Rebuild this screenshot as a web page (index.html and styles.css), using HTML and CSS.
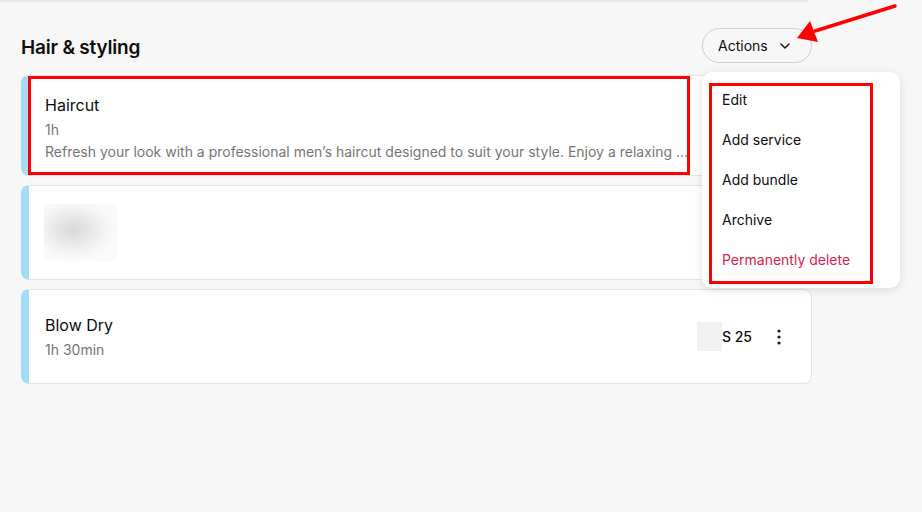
FILE: index.html
```html
<!DOCTYPE html>
<html>
<head>
<meta charset="utf-8">
<link rel="stylesheet" href="styles.css">
</head>
<body>
<div class="divider"></div>
<main class="section">
  <header class="section-head">
    <h2 class="section-title">Hair &amp; styling</h2>
    <div class="actions">
      <button class="actions-btn">Actions
        <svg class="chev" width="10" height="6" viewBox="0 0 10 6"><path d="M1 1l4 4 4-4" fill="none" stroke="#1a1a1a" stroke-width="1.5" stroke-linecap="round" stroke-linejoin="round"/></svg>
      </button>
      <ul class="menu">
        <li class="menu-item">Edit</li>
        <li class="menu-item">Add service</li>
        <li class="menu-item">Add bundle</li>
        <li class="menu-item">Archive</li>
        <li class="menu-item danger">Permanently delete</li>
      </ul>
      <div class="annot annot-menu"></div>
    </div>
  </header>
  <div class="cards">
    <article class="card card-first">
      <div class="card-body">
        <div class="card-title">Haircut</div>
        <div class="card-sub">1h</div>
        <div class="card-desc">Refresh your look with a professional men’s haircut designed to suit your style. Enjoy a relaxing ...</div>
      </div>
      <div class="annot annot-card"></div>
    </article>
    <article class="card card-mid">
      <div class="blur-block"></div>
    </article>
    <article class="card card-last">
      <div class="card-body">
        <div class="card-title">Blow Dry</div>
        <div class="card-sub">1h 30min</div>
      </div>
      <div class="card-right">
        <span class="price-blur"></span>
        <span class="price">S 25</span>
        <svg class="kebab" width="4" height="16" viewBox="0 0 4 16"><circle cx="2" cy="2" r="1.6" fill="#1a1a1a"/><circle cx="2" cy="8" r="1.6" fill="#1a1a1a"/><circle cx="2" cy="14" r="1.6" fill="#1a1a1a"/></svg>
      </div>
    </article>
  </div>
</main>
<svg class="arrow" width="922" height="70" viewBox="0 0 922 70">
  <line x1="895" y1="6" x2="815" y2="31" stroke="#ff0000" stroke-width="3.5" stroke-linecap="round"/>
  <polygon points="797,38 810,21 818,42" fill="#ff0000"/>
</svg>
</body>
</html>
```
FILE: styles.css
```css
* { box-sizing: border-box; }
html, body { margin: 0; padding: 0; }
body {
  background: #f7f7f7;
  font-family: Inter, "Noto Sans", "Liberation Sans", sans-serif;
  color: #0d0d0d;
  width: 922px;
  height: 512px;
  overflow: hidden;
  position: relative;
}
.divider {
  width: 808px;
  height: 2px;
  background: #e6e6e6;
}
.section {
  width: 791px;
  margin-left: 21px;
}
.section-head {
  display: flex;
  align-items: center;
  justify-content: space-between;
  margin-top: 26px;
  height: 34px;
}
.section-title {
  margin: 4px 0 0;
  font-size: 19px;
  font-weight: 600;
  letter-spacing: -0.2px;
}
.actions { position: relative; }
.actions-btn {
  display: flex;
  align-items: center;
  gap: 12px;
  height: 35px;
  width: 110px;
  padding: 0 0 0 15px;
  border: 1px solid #cfcfcf;
  border-radius: 18px;
  background: #f7f7f7;
  font-family: inherit;
  font-size: 14px;
  font-weight: 400;
  color: #0d0d0d;
}
.chev { margin-top: 1px; }
.menu {
  position: absolute;
  left: 0;
  top: 44px;
  width: 198px;
  margin: 0;
  padding: 8px 0;
  list-style: none;
  background: #fff;
  border-radius: 10px;
  box-shadow: 0 2px 10px rgba(0,0,0,0.12);
  z-index: 5;
}
.menu-item {
  height: 40px;
  line-height: 40px;
  padding-left: 20px;
  font-size: 14px;
  font-weight: 400;
}
.menu-item.danger { color: #d9214e; }
.cards {
  margin-top: 13px;
  display: flex;
  flex-direction: column;
  gap: 9px;
}
.card {
  position: relative;
  display: flex;
  align-items: center;
  background: #fff;
  border: 1px solid #e4e4e4;
  border-left: 8px solid #a4dcf6;
  border-radius: 8px;
  padding: 0 16px;
}
.card-first { height: 101px; align-items: flex-start; padding-top: 17px; }
.card-mid { height: 95px; }
.card-last { height: 95px; justify-content: space-between; }
.card-body { min-width: 0; flex: 1; }
.card-title { font-size: 16px; line-height: 24px; font-weight: 400; }
.card-sub, .card-desc { font-size: 14px; line-height: 22px; color: #767676; }
.card-sub { margin-top: 2px; }
.card-desc {
  white-space: nowrap;
  width: 642px;
}
.blur-block {
  width: 73px;
  height: 57px;
  background: radial-gradient(ellipse 60% 55% at 40% 45%, #d9d9d9 0%, #e9e9e9 45%, #f6f6f6 80%, #fafafa 100%);
  margin-left: -1px;
}
.card-right {
  display: flex;
  align-items: center;
  margin-right: 14px;
}
.price-blur {
  width: 25px;
  height: 29px;
  background: #f1f1f1;
}
.price { font-size: 14px; font-weight: 500; margin-right: 25px; }
.kebab { display: block; }
.annot {
  position: absolute;
  border: 3px solid #ff0000;
  pointer-events: none;
}
.annot-card { left: -1px; top: 0; width: 662px; height: 99px; }
.annot-menu { left: 7px; top: 55px; width: 164px; height: 201px; z-index: 6; }
.arrow { position: absolute; left: 0; top: 0; }
```
